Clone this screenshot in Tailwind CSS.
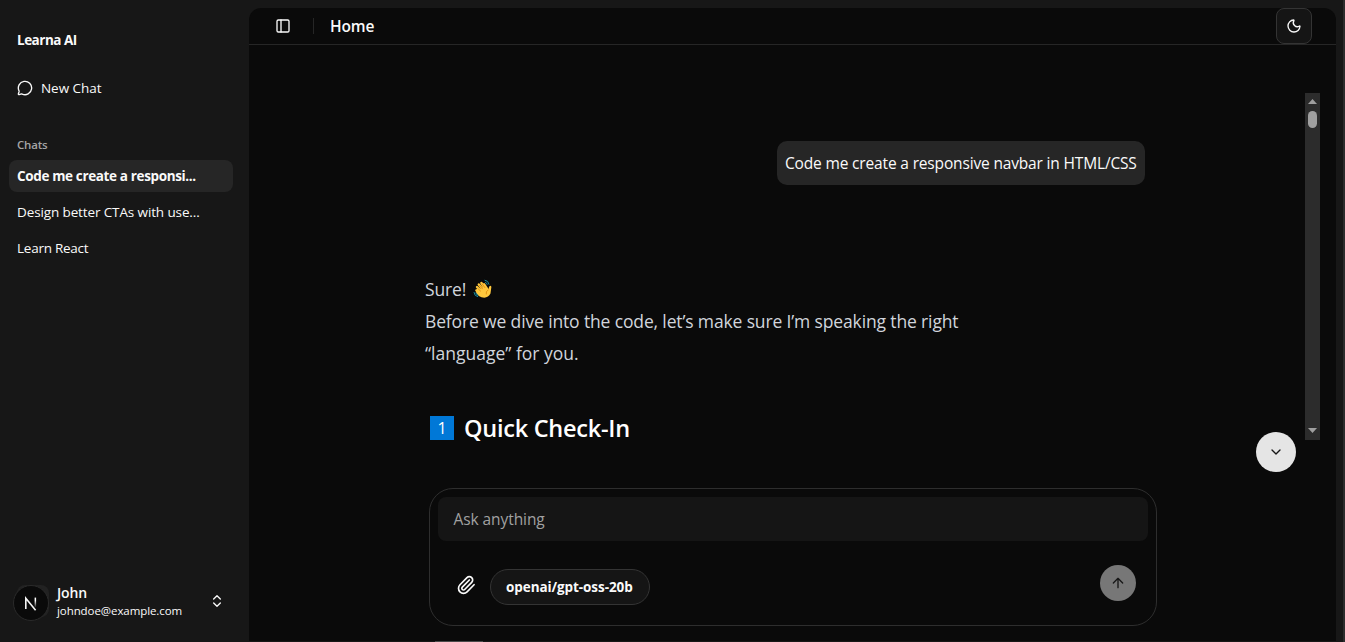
<!DOCTYPE html>
<html lang="en">
<head>
<meta charset="utf-8">
<title>Learna AI</title>
<script src="https://cdn.jsdelivr.net/npm/@tailwindcss/browser@4"></script>
</head>
<body class="relative flex h-[642px] w-[1345px] overflow-hidden bg-[#171717] font-['Open_Sans',sans-serif] text-[#fafafa]">
<aside class="flex w-[249px] shrink-0 flex-col pl-[9px] pr-4">
  <h1 class="mt-6 h-8 px-2 text-[13.5px] leading-8 font-bold tracking-[-0.5px]"><span>Learna AI</span></h1>
  <a class="mt-4 flex h-8 items-center gap-2 px-2 text-[13.5px]">
    <svg class="size-4" viewBox="0 0 24 24" fill="none" stroke="currentColor" stroke-width="2" stroke-linecap="round" stroke-linejoin="round"><path d="M2.992 16.342a2 2 0 0 1 .094 1.167l-1.065 3.29a1 1 0 0 0 1.236 1.168l3.413-.998a2 2 0 0 1 1.099.092 10 10 0 1 0-4.777-4.719"/></svg>
    <span class="tracking-[-0.05px]">New Chat</span>
  </a>
  <h2 class="mt-6 h-8 px-2 pt-px text-[11.5px] leading-8 font-semibold tracking-[-0.2px] text-[#a5a5a5]"><span>Chats</span></h2>
  <nav class="flex flex-col gap-1 text-[13.5px] leading-8 whitespace-nowrap">
    <a class="h-8 rounded-lg bg-[#262626] px-2 font-bold tracking-[-0.36px]"><span>Code me create a responsi...</span></a>
    <a class="h-8 px-2 tracking-[-0.12px]"><span>Design better CTAs with use...</span></a>
    <a class="h-8 px-2 tracking-[-0.25px]"><span>Learn React</span></a>
  </nav>
  <div class="mt-auto mb-[21px] ml-[4px] flex h-9 items-center">
    <div class="relative size-9 rounded-full">
      <span class="absolute top-0 right-0 size-8 rounded-lg bg-[#222222]"></span>
      <svg class="absolute inset-0 size-9" viewBox="0 0 36 36" fill="none">
        <defs><linearGradient id="a" x1="0" y1="0" x2="0" y2="1"><stop offset=".3" stop-color="#fff"/><stop offset="1" stop-color="#fff" stop-opacity=".1"/></linearGradient></defs>
        <circle cx="18" cy="18" r="17.5" fill="#0a0a0a" stroke="#2a2a2a"/>
        <path d="M12.8 24V13.2L22.6 25.2" stroke="#f5f5f5" stroke-width="1.6"/>
        <rect x="21.6" y="12.6" width="1.5" height="9.5" fill="url(#a)"/>
      </svg>
    </div>
    <div class="mb-[3px] ml-2 flex-1 text-sm leading-[18px]">
      <p class="font-semibold tracking-[-0.1px]"><span>John</span></p>
      <p class="text-[11.5px] leading-[17px] tracking-[-0.08px]"><span>johndoe@example.com</span></p>
    </div>
    <svg class="mr-2 mb-1 size-4" viewBox="0 0 24 24" fill="none" stroke="currentColor" stroke-width="2" stroke-linecap="round" stroke-linejoin="round"><path d="m7 15 5 5 5-5"/><path d="m7 9 5-5 5 5"/></svg>
  </div>
</aside>
<main class="mt-2 flex h-[633px] w-[1087px] flex-col rounded-t-xl bg-[#0a0a0a]">
  <header class="flex h-[37px] shrink-0 items-center border-b border-[#262626] pl-[26px] pr-6">
    <svg class="size-4" viewBox="0 0 24 24" fill="none" stroke="currentColor" stroke-width="2" stroke-linecap="round" stroke-linejoin="round"><rect width="18" height="18" x="3" y="3" rx="2"/><path d="M9 3v18"/></svg>
    <i class="ml-[22px] h-4 w-px bg-[#262626]"></i>
    <h2 class="ml-4 pt-0.5 text-[15.5px] font-semibold tracking-[-0.15px]"><span>Home</span></h2>
    <button class="ml-auto grid size-9 place-items-center rounded-lg border border-[#343434] bg-[#151515]">
      <svg class="size-4" viewBox="0 0 24 24" fill="none" stroke="currentColor" stroke-width="2" stroke-linecap="round" stroke-linejoin="round"><path d="M20.985 12.486a9 9 0 1 1-9.473-9.472c.405-.022.617.46.402.803a6 6 0 0 0 8.268 8.268c.344-.215.825-.004.803.401"/></svg>
    </button>
  </header>
  <section class="mt-12 flex h-[347px] shrink-0 pr-4 pl-[176px]">
    <div class="flex w-[720px] flex-col">
      <p class="mt-12 flex h-11 w-[368px] shrink-0 items-center self-end rounded-[10px] bg-[#262626] px-2 pt-0.5 text-[15.5px] tracking-[-0.16px] whitespace-nowrap"><span>Code me create a responsive navbar in HTML/CSS</span></p>
      <div class="mt-[88px] shrink-0 text-[17.5px] leading-8 tracking-[-0.14px] whitespace-nowrap text-[#d1d5dc]">
        <p class="flex items-center"><span class="w-[41px]">Sure!</span>
          <svg class="ml-[7px] size-5" viewBox="0 0 20 20" fill="none" stroke-linecap="round" stroke-linejoin="round">
            <path d="M4 9.2 3 12Q2.5 15.6 8.5 18.3Q14.8 20 17.5 14.6L18.4 7.7Q17.5 6 16.1 7.7L15.4 10.4" fill="#ffc83d"/>
            <path d="m9 13-5-5m7 4L5.8 5.4M13 11 8.4 4m6.4 7L11 5.2M6 14l-2.6-2.6" stroke="#ffc83d" stroke-width="2.4"/>
            <path d="m9.4 9.8-3-3.3m5.4 2L9.2 5M7.5 12 4.6 9.2M15 11q-2.5 1.5-1.8 4" stroke="#d67d00" stroke-width=".7"/>
            <path d="M12 1.2q3.4.3 4 4M12.5 3.4q1.5.3 1.7 2M1 13.5q.2 3.4 3.7 4.2M2.8 14q.2 1.8 2 2.2" stroke="#168ba0" stroke-width="1"/>
          </svg>
        </p>
        <p><span>Before we dive into the code, let’s make sure I’m speaking the right</span></p>
        <p class="tracking-normal"><span>“language” for you.</span></p>
      </div>
      <h2 class="mt-[41px] flex h-9 shrink-0 items-center pl-[5px] text-[23.5px] font-semibold tracking-[-0.25px] text-white">
        <b class="grid size-6 place-items-center bg-[#0078d7] text-base leading-6 font-normal">1</b><span class="ml-[10px] pt-0.5">Quick Check-In</span>
      </h2>
    </div>
    <div class="ml-auto flex w-[15px] flex-col items-center bg-[#2c2c2c]">
      <svg class="h-[18px] w-[15px]" viewBox="0 0 15 18" fill="#9f9f9f"><path d="M3 11 7.5 6 12 11Z"/></svg>
      <i class="h-[17px] w-[9px] rounded-full bg-[#9f9f9f]"></i>
      <svg class="mt-auto h-[18px] w-[15px]" viewBox="0 0 15 18" fill="#9f9f9f"><path d="M3 6 7.5 11 12 6Z"/></svg>
    </div>
  </section>
  <form class="mt-12 ml-[180px] h-[138px] w-[728px] shrink-0 rounded-3xl border border-[#2e2e2e] p-2">
    <div class="flex h-11 items-center rounded-lg bg-[#151515] px-[15.5px] pt-0.5 text-[15.5px] tracking-[-0.08px] text-[#a1a1a1]"><span>Ask anything</span></div>
    <div class="mt-7 flex h-9 items-center pl-[18px] pr-3">
      <svg class="-mt-1 size-5" viewBox="0 0 24 24" fill="none" stroke="currentColor" stroke-width="2" stroke-linecap="round" stroke-linejoin="round"><path d="m16 6-8.414 8.586a2 2 0 0 0 2.829 2.829l8.414-8.586a4 4 0 1 0-5.657-5.657l-8.379 8.551a6 6 0 1 0 8.485 8.485l8.379-8.551"/></svg>
      <div class="ml-[14px] flex h-9 w-40 items-center rounded-full border border-[#343434] bg-[#151515] px-[15px] text-[13.5px] font-bold tracking-[-0.08px] whitespace-nowrap"><span>openai/gpt-oss-20b</span></div>
      <div class="-mt-2 ml-auto grid size-9 place-items-center rounded-full bg-[#777777] text-[#171717]">
        <svg class="size-4" viewBox="0 0 24 24" fill="none" stroke="currentColor" stroke-width="2" stroke-linecap="round" stroke-linejoin="round"><path d="m5 12 7-7 7 7M12 19V5"/></svg>
      </div>
    </div>
  </form>
</main>
<button class="absolute top-[432px] left-[1256px] grid size-10 place-items-center rounded-full bg-[#e5e5e5] text-[#171717]">
  <svg class="size-4" viewBox="0 0 24 24" fill="none" stroke="currentColor" stroke-width="2" stroke-linecap="round" stroke-linejoin="round"><path d="m6 9 6 6 6-6"/></svg>
</button>
<i class="absolute inset-y-0 right-0 w-0.5 bg-[#2c2c2c]"></i>
<i class="absolute bottom-0 left-[435px] h-px w-12 bg-[#4a4a4a]"></i>
</body>
</html>
